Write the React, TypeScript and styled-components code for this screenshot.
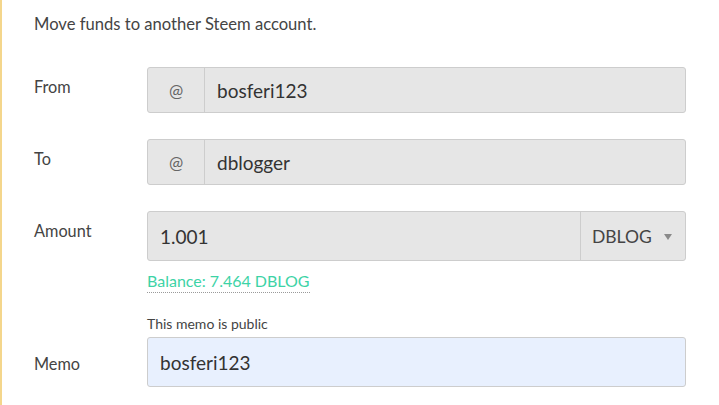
import React from "react";
import styled, { createGlobalStyle } from "styled-components";

const Global = createGlobalStyle`
  html, body { margin: 0; padding: 0; background: #ffffff; }
  body { font-family: Lato, "Liberation Sans", sans-serif; color: #3a3a3a; }
`;

const Page = styled.div`
  box-sizing: border-box;
  min-height: 405px;
  border-left: 2px solid #f4d68c;
  padding: 12px 33px 0 32px;
`;

const Intro = styled.p`
  margin: 0 0 31px;
  font-size: 16.6px;
  line-height: 24px;
  color: #444;
`;

const Row = styled.div<{ $gap?: number }>`
  display: grid;
  grid-template-columns: 113px 539px;
  align-items: start;
  margin-bottom: ${(p) => p.$gap ?? 26}px;
`;

const Label = styled.label<{ $top?: number }>`
  font-size: 16.3px;
  line-height: 24px;
  color: #444;
  padding-top: ${(p) => p.$top ?? 8}px;
`;

const Field = styled.div`
  display: flex;
  flex-direction: column;
`;

const Group = styled.div<{ $h: number; $bg?: string }>`
  box-sizing: border-box;
  display: flex;
  height: ${(p) => p.$h}px;
  background: ${(p) => p.$bg ?? "#e6e6e6"};
  border: 1px solid #cdcdcd;
  border-radius: 3px;
  overflow: hidden;
`;

const Addon = styled.div`
  width: 56px;
  flex: none;
  display: flex;
  align-items: center;
  justify-content: center;
  border-right: 1px solid #cdcdcd;
  font-size: 17px;
  color: #666;
`;

const Value = styled.div`
  flex: 1;
  display: flex;
  align-items: center;
  padding-left: 12px;
  font-size: 19px;
  color: #333;
`;

const Select = styled.div`
  width: 105px;
  flex: none;
  display: flex;
  align-items: center;
  gap: 12px;
  padding-left: 11px;
  box-sizing: border-box;
  border-left: 1px solid #cdcdcd;
  font-size: 17.5px;
  color: #444;
`;

const Caret = styled.span`
  width: 0;
  height: 0;
  border-left: 4px solid transparent;
  border-right: 4px solid transparent;
  border-top: 6px solid #8a8a8a;
  margin-top: 1px;
`;

const Balance = styled.div`
  margin-top: 8px;
  font-size: 16px;
  line-height: 24px;
`;

const BalanceLink = styled.span`
  color: #3dd3a6;
  border-bottom: 1px dotted #9a9a9a;
  padding-bottom: 2px;
`;

const Notice = styled.div`
  font-size: 14px;
  line-height: 17px;
  color: #444;
  margin-bottom: 5px;
`;

export default function App() {
  return (
    <>
      <Global />
      <Page>
        <Intro>Move funds to another Steem account.</Intro>
        <Row>
          <Label>From</Label>
          <Group $h={46}>
            <Addon>@</Addon>
            <Value>bosferi123</Value>
          </Group>
        </Row>
        <Row>
          <Label>To</Label>
          <Group $h={46}>
            <Addon>@</Addon>
            <Value>dblogger</Value>
          </Group>
        </Row>
        <Row $gap={22}>
          <Label>Amount</Label>
          <Field>
            <Group $h={50}>
              <Value>1.001</Value>
              <Select>
                DBLOG
                <Caret />
              </Select>
            </Group>
            <Balance>
              <BalanceLink>Balance: 7.464 DBLOG</BalanceLink>
            </Balance>
          </Field>
        </Row>
        <Row>
          <Label $top={37}>Memo</Label>
          <Field>
            <Notice>This memo is public</Notice>
            <Group $h={50} $bg="#e8f0fe">
              <Value>bosferi123</Value>
            </Group>
          </Field>
        </Row>
      </Page>
    </>
  );
}
